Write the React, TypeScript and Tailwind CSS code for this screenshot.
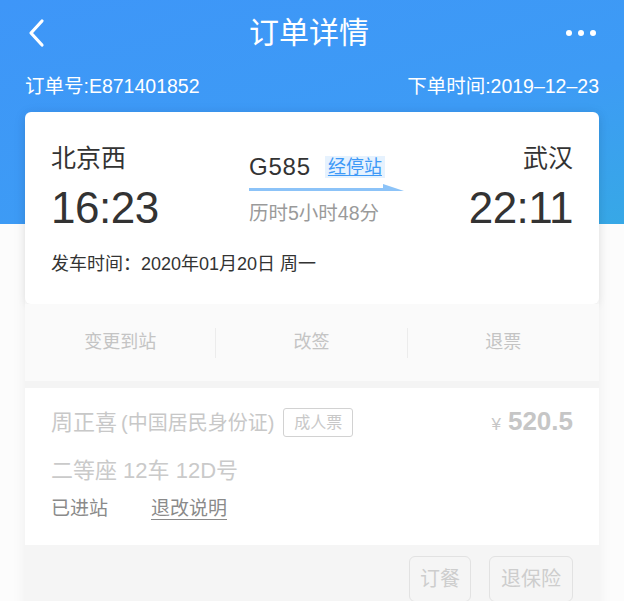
import React from 'react';

const font = '"Liberation Sans", "Noto Sans CJK SC", sans-serif';

function App() {
  return (
    <div
      className="w-[624px] h-[601px] overflow-hidden bg-[#fcfcfc] bg-no-repeat bg-[length:100%_224px] bg-[linear-gradient(165deg,#3e96f8_0%,#3d9bf5_60%,#37a8e6_100%)]"
      style={{ fontFamily: font }}
    >
      {/* nav bar */}
      <div className="h-[66px] flex items-center justify-between pl-[26px] pr-[28px] text-white">
        <svg width="22" height="30" viewBox="0 0 22 30" fill="none">
          <path d="M16 3 L5 15 L16 27" stroke="white" strokeWidth="3.2" strokeLinecap="round" strokeLinejoin="round" />
        </svg>
        <h1 className="text-[30px] leading-none ml-[4px]">订单详情</h1>
        <div className="flex gap-[6px] items-center">
          <span className="w-[6px] h-[6px] rounded-full bg-white" />
          <span className="w-[6px] h-[6px] rounded-full bg-white" />
          <span className="w-[6px] h-[6px] rounded-full bg-white" />
        </div>
      </div>

      {/* order line */}
      <div className="h-[44px] flex items-center justify-between px-[25px] pb-[2px] text-white text-[19.5px] leading-none">
        <span>订单号:E871401852</span>
        <span>下单时间:2019–12–23</span>
      </div>

      <div className="mx-[25px] mt-[2px] shadow-[0_2px_14px_rgba(0,0,0,0.06)]">
        {/* train card */}
        <div className="bg-white rounded-[6px] px-[26px] pt-[34px] h-[192px] shadow-[0_2px_8px_rgba(0,0,0,0.08)]">
          <div className="flex">
            <div className="w-[198px]">
              <div className="text-[25px] leading-none text-[#333]">北京西</div>
              <div className="text-[44px] leading-none text-[#333] mt-[15px] tracking-[-0.5px]">16:23</div>
            </div>
            <div className="w-[156px] pt-[9px]">
              <div className="flex items-center">
                <span className="text-[24px] leading-none text-[#333] tracking-[0.8px]">G585</span>
                <span className="ml-[14px] bg-[#e6f2fe] text-[#3d99f7] text-[18px] leading-[22px] px-[3px] underline underline-offset-2">经停站</span>
              </div>
              <svg width="156" height="8" viewBox="0 0 156 8" className="mt-[5px] block">
                <rect x="0" y="4" width="140" height="3" fill="#8cc3f8" />
                <path d="M134 0 L155 7 L134 7 Z" fill="#8cc3f8" />
              </svg>
              <div className="text-[19.5px] leading-none text-[#9a9a9a] mt-[12px]">历时5小时48分</div>
            </div>
            <div className="flex-1 flex flex-col items-end">
              <div className="text-[25px] leading-none text-[#333]">武汉</div>
              <div className="text-[44px] leading-none text-[#333] mt-[15px] tracking-[-0.5px]">22:11</div>
            </div>
          </div>
          <div className="text-[18px] leading-none text-[#333] mt-[25px]">发车时间：2020年01月20日 周一</div>
        </div>

        {/* actions */}
        <div className="h-[77px] bg-[#fafafa] grid grid-cols-3 items-center text-[18px] text-[#c4c4c4]">
          <div className="text-center border-r border-[#ececec] leading-[28px] pb-[2px]">变更到站</div>
          <div className="text-center border-r border-[#ececec] leading-[28px] pb-[2px]">改签</div>
          <div className="text-center leading-[28px] pb-[2px]">退票</div>
        </div>

        <div className="h-[7px] bg-[#f4f4f4]" />

        {/* passenger */}
        <div className="bg-white h-[157px] px-[26px] pt-[20px]">
          <div className="flex items-center justify-between">
            <div className="flex items-center">
              <span className="text-[22px] text-[#c8c8c8] leading-none">周正喜</span>
              <span className="text-[20px] text-[#c8c8c8] leading-none ml-[4px]">(中国居民身份证)</span>
              <span className="ml-[9px] border border-[#d2d2d2] rounded-[3px] text-[16px] text-[#c8c8c8] h-[29px] px-[10px] flex items-center">成人票</span>
            </div>
            <div className="flex items-baseline text-[#c6c6c6]">
              <span className="text-[17px]">¥</span>
              <span className="text-[26px] font-bold ml-[7px] leading-none">520.5</span>
            </div>
          </div>
          <div className="text-[22px] text-[#cacaca] leading-none mt-[22px]">二等座 12车 12D号</div>
          <div className="flex text-[19px] text-[#8a8a8a] leading-none mt-[17px]">
            <span>已进站</span>
            <span className="ml-[43px] underline underline-offset-4">退改说明</span>
          </div>
        </div>

        {/* bottom buttons */}
        <div className="bg-[#f5f5f5] h-[70px] flex justify-end gap-[18px] pt-[11px] pr-[26px]">
          <div className="w-[62px] h-[46px] border border-[#e2e2e2] rounded-[6px] flex items-center justify-center text-[20px] text-[#cdcdcd]">订餐</div>
          <div className="w-[84px] h-[46px] border border-[#e2e2e2] rounded-[6px] flex items-center justify-center text-[20px] text-[#cdcdcd]">退保险</div>
        </div>
      </div>
    </div>
  );
}

export default App;
